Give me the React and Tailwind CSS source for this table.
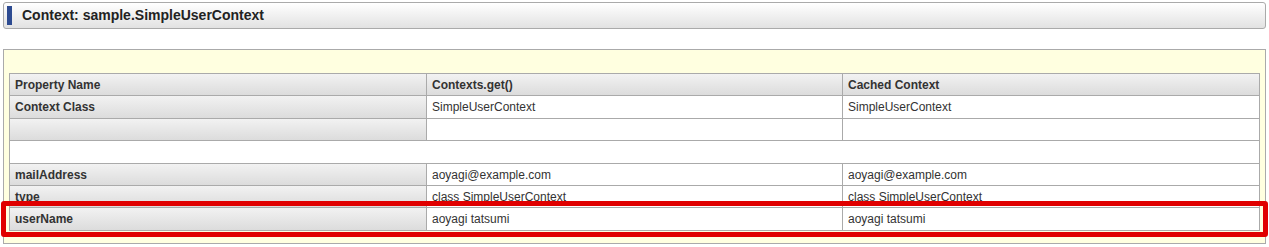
const rows = [
  { kind: 'head', cells: ['Property Name', 'Contexts.get()', 'Cached Context'], h: 'h-[22px]' },
  { kind: 'row', cells: ['Context Class', 'SimpleUserContext', 'SimpleUserContext'], h: 'h-[23px]' },
  { kind: 'row', cells: ['', '', ''], h: 'h-[22px]' },
  { kind: 'blank', h: 'h-[23px]' },
  { kind: 'row', cells: ['mailAddress', 'aoyagi@example.com', 'aoyagi@example.com'], h: 'h-[22px]' },
  { kind: 'row', cells: ['type', 'class SimpleUserContext', 'class SimpleUserContext'], h: 'h-[22px]' },
  { kind: 'row', cells: ['userName', 'aoyagi tatsumi', 'aoyagi tatsumi'], h: 'h-[23px]' },
]

const grayCell = 'bg-gradient-to-b from-[#f2f2f2] to-[#dcdcdc] font-bold'

function Row({ row }) {
  if (row.kind === 'blank') {
    return <div className={`${row.h} border-t border-[#aaa] bg-white`} />
  }
  return (
    <div className={`${row.h} grid grid-cols-[416px_416px_1fr] border-t border-[#aaa]`}>
      {row.cells.map((text, i) => (
        <div
          key={i}
          className={`flex items-center pl-[5px] ${i > 0 ? 'border-l border-[#aaa]' : ''} ${
            row.kind === 'head' || i === 0 ? grayCell : 'bg-white'
          }`}
        >
          {text}
        </div>
      ))}
    </div>
  )
}

export default function App() {
  return (
    <div className="relative h-[247px] w-[1269px] bg-white px-[3px] pt-[2px] font-['Liberation_Sans',Arial,sans-serif] text-[12px] text-[#333]">
      {/* section title */}
      <div className="flex h-[27px] items-center rounded-[3px] border border-[#aaa] bg-gradient-to-b from-white to-[#e2e2e2] pl-[3px]">
        <div className="h-[19px] w-[5px] bg-[#2d4b91]" />
        <h2 className="ml-[10px] text-[14px] font-bold text-[#222]">Context: sample.SimpleUserContext</h2>
      </div>

      <div className="mt-[20px] border border-[#aaa] bg-[#ffffe0] px-[5px] pt-[23px] pb-[12px]">
        <div className="border-x border-b border-[#aaa]">
          {rows.map((row, i) => (
            <Row key={i} row={row} />
          ))}
        </div>
      </div>

      {/* highlight */}
      <div className="absolute left-[1px] top-[201px] h-[36px] w-[1267px] rounded-[3px] border-[5px] border-[#e00000]" />
    </div>
  )
}
